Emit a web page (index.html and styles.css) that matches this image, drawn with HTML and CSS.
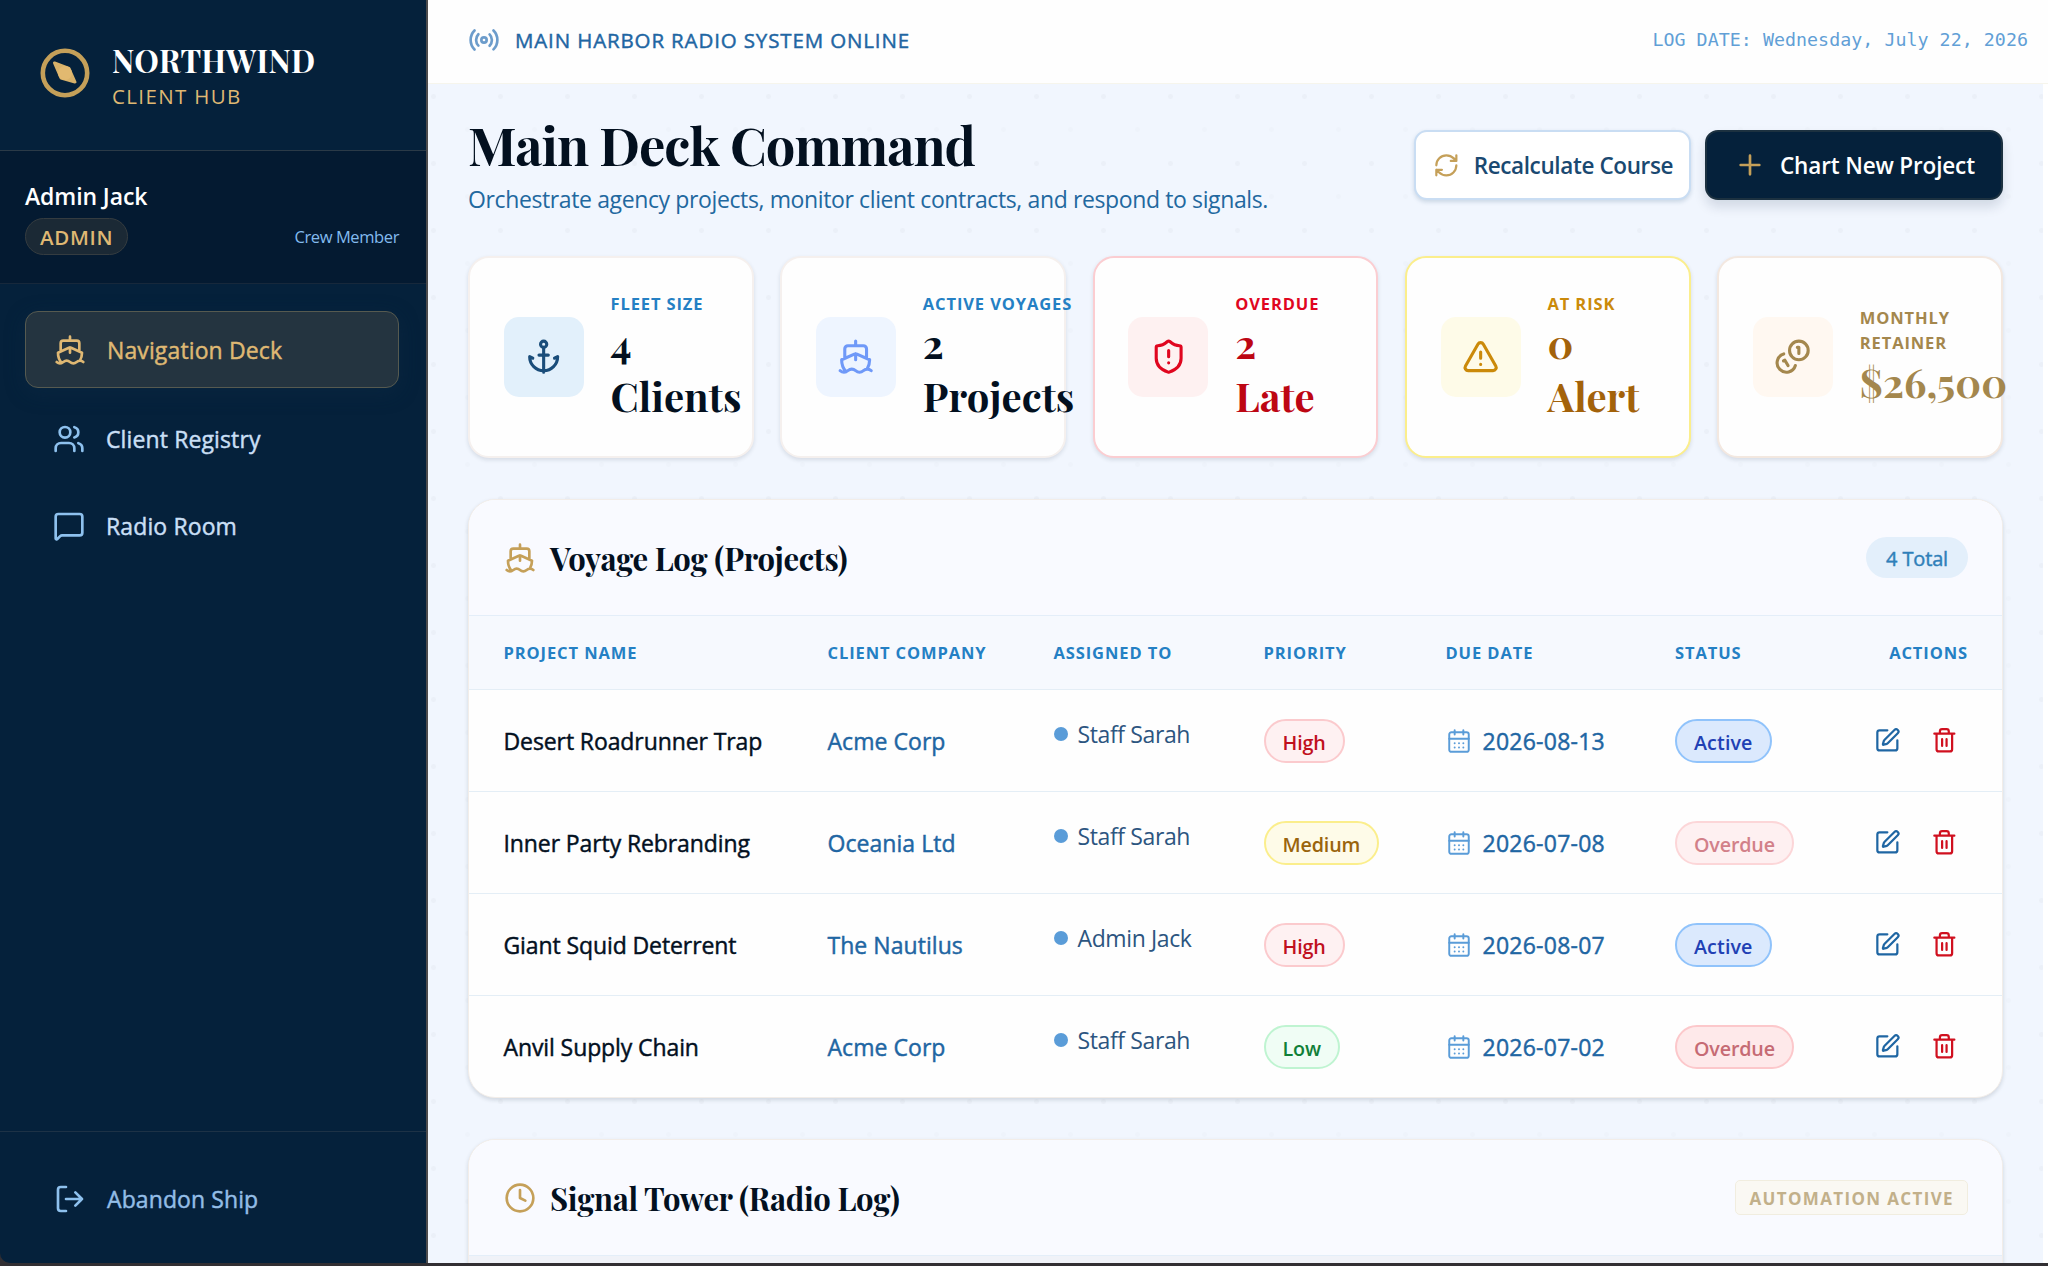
FILE: index.html
```html
<!DOCTYPE html>
<html lang="en">
<head>
<meta charset="utf-8">
<title>Northwind Client Hub</title>
<link rel="stylesheet" href="styles.css">
</head>
<body>
<svg class="sprite" aria-hidden="true">
  <symbol id="i-ship" viewBox="0 0 24 24"><path d="M12 10.189V14M12 2v3M19 13V7a2 2 0 0 0-2-2H7a2 2 0 0 0-2 2v6M19.38 20A11.6 11.6 0 0 0 21 14l-8.188-3.639a2 2 0 0 0-1.624 0L3 14a11.6 11.6 0 0 0 2.81 7.76M2 21c.6.5 1.2 1 2.5 1 2.5 0 2.5-2 5-2 1.3 0 1.9.5 2.5 1s1.2 1 2.5 1c2.5 0 2.5-2 5-2 1.3 0 1.9.5 2.5 1"/></symbol>
  <symbol id="i-users" viewBox="0 0 24 24"><path d="M16 21v-2a4 4 0 0 0-4-4H6a4 4 0 0 0-4 4v2M16 3.128a4 4 0 0 1 0 7.744M22 21v-2a4 4 0 0 0-3-3.87"/><circle cx="9" cy="7" r="4"/></symbol>
  <symbol id="i-chat" viewBox="0 0 24 24"><path d="M22 17a2 2 0 0 1-2 2H6.828a2 2 0 0 0-1.414.586l-2.202 2.202A.71.71 0 0 1 2 21.286V5a2 2 0 0 1 2-2h16a2 2 0 0 1 2 2z"/></symbol>
  <symbol id="i-exit" viewBox="0 0 24 24"><path d="M9 21H5a2 2 0 0 1-2-2V5a2 2 0 0 1 2-2h4M16 17l5-5-5-5M21 12H9"/></symbol>
  <symbol id="i-radio" viewBox="0 0 24 24"><path d="M4.9 19.1C1 15.2 1 8.8 4.9 4.9M7.8 16.2c-2.3-2.3-2.3-6.1 0-8.5M16.2 7.8c2.3 2.3 2.3 6.1 0 8.5M19.1 4.9C23 8.8 23 15.1 19.1 19"/><circle cx="12" cy="12" r="2"/></symbol>
  <symbol id="i-refresh" viewBox="0 0 24 24"><path d="M3 12a9 9 0 0 1 9-9 9.75 9.75 0 0 1 6.74 2.74L21 8M21 3v5h-5M21 12a9 9 0 0 1-9 9 9.75 9.75 0 0 1-6.74-2.74L3 16M8 16H3v5"/></symbol>
  <symbol id="i-plus" viewBox="0 0 24 24"><path d="M5 12h14M12 5v14"/></symbol>
  <symbol id="i-anchor" viewBox="0 0 24 24"><path d="M12 22V6M9 11h6M19 13l2-1a9 9 0 0 1-18 0l2 1"/><circle cx="12" cy="4" r="2"/></symbol>
  <symbol id="i-shield" viewBox="0 0 24 24"><path d="M20 13c0 5-3.5 7.5-7.66 8.95a1 1 0 0 1-.67-.01C7.5 20.5 4 18 4 13V6a1 1 0 0 1 1-1c2 0 4.5-1.2 6.24-2.72a1.17 1.17 0 0 1 1.52 0C14.51 3.81 17 5 19 5a1 1 0 0 1 1 1zM12 8v4M12 16h.01"/></symbol>
  <symbol id="i-alert" viewBox="0 0 24 24"><path d="m21.73 18-8-14a2 2 0 0 0-3.48 0l-8 14A2 2 0 0 0 4 21h16a2 2 0 0 0 1.73-3M12 9v4M12 17h.01"/></symbol>
  <symbol id="i-coins" viewBox="0 0 24 24"><path d="M13.744 17.736a6 6 0 1 1-7.48-7.48M15 6h1v4M6.134 14.768l.866-.5 2 3.464"/><circle cx="16" cy="8" r="6"/></symbol>
  <symbol id="i-cal" viewBox="0 0 24 24"><path d="M8 2v4M16 2v4M3 10h18M8 14h.01M12 14h.01M16 14h.01M8 18h.01M12 18h.01M16 18h.01"/><rect x="3" y="4" width="18" height="18" rx="2"/></symbol>
  <symbol id="i-edit" viewBox="0 0 24 24"><path d="M12 3H5a2 2 0 0 0-2 2v14a2 2 0 0 0 2 2h14a2 2 0 0 0 2-2v-7M18.375 2.625a1 1 0 0 1 3 3l-9.013 9.014a2 2 0 0 1-.853.505l-2.873.84a.5.5 0 0 1-.62-.62l.84-2.873a2 2 0 0 1 .506-.852z"/></symbol>
  <symbol id="i-trash" viewBox="0 0 24 24"><path d="M10 11v6M14 11v6M19 6v14a2 2 0 0 1-2 2H7a2 2 0 0 1-2-2V6M3 6h18M8 6V4a2 2 0 0 1 2-2h4a2 2 0 0 1 2 2v2"/></symbol>
  <symbol id="i-clock" viewBox="0 0 24 24"><circle cx="12" cy="12" r="10"/><path d="M12 6v6l4 2"/></symbol>
</svg>

<div class="app">
  <aside class="sidebar">
    <div class="brand">
      <svg class="brand-mark" viewBox="0 0 50 50"><circle class="ring" cx="25" cy="25" r="22.2"/><path class="needle" d="M14.5 15 29 20.5 35 34 21 30Z"/><circle class="hub" cx="25" cy="25" r="7"/></svg>
      <div class="brand-text">
        <div class="brand-name">NORTHWIND</div>
        <div class="brand-sub">CLIENT HUB</div>
      </div>
    </div>
    <div class="user">
      <div class="user-name">Admin Jack</div>
      <div class="user-row"><span class="role">ADMIN</span><span class="crew">Crew Member</span></div>
    </div>
    <nav class="nav">
      <a class="nav-item active"><svg class="icon"><use href="#i-ship"/></svg><span>Navigation Deck</span></a>
      <a class="nav-item"><svg class="icon"><use href="#i-users"/></svg><span>Client Registry</span></a>
      <a class="nav-item"><svg class="icon"><use href="#i-chat"/></svg><span>Radio Room</span></a>
    </nav>
    <div class="side-foot"><a class="leave"><svg class="icon"><use href="#i-exit"/></svg><span>Abandon Ship</span></a></div>
  </aside>

  <div class="main">
    <header class="topbar">
      <div class="status"><svg class="icon"><use href="#i-radio"/></svg><span>MAIN HARBOR RADIO SYSTEM ONLINE</span></div>
      <div class="log-date">LOG DATE: Wednesday, July 22, 2026</div>
    </header>
    <main class="content">
      <div class="page-head">
        <div>
          <h1>Main Deck Command</h1>
          <p class="lead">Orchestrate agency projects, monitor client contracts, and respond to signals.</p>
        </div>
        <div class="head-actions">
          <button class="btn btn-light"><svg class="icon"><use href="#i-refresh"/></svg><span>Recalculate Course</span></button>
          <button class="btn btn-dark"><svg class="icon"><use href="#i-plus"/></svg><span>Chart New Project</span></button>
        </div>
      </div>

      <section class="stats">
        <div class="stat fleet"><div class="stat-icon"><svg class="icon"><use href="#i-anchor"/></svg></div><div><div class="stat-label">FLEET SIZE</div><div class="stat-value">4<br>Clients</div></div></div>
        <div class="stat voyages"><div class="stat-icon"><svg class="icon"><use href="#i-ship"/></svg></div><div><div class="stat-label">ACTIVE VOYAGES</div><div class="stat-value">2<br>Projects</div></div></div>
        <div class="stat overdue"><div class="stat-icon"><svg class="icon"><use href="#i-shield"/></svg></div><div><div class="stat-label">OVERDUE</div><div class="stat-value">2<br>Late</div></div></div>
        <div class="stat risk"><div class="stat-icon"><svg class="icon"><use href="#i-alert"/></svg></div><div><div class="stat-label">AT RISK</div><div class="stat-value">0<br>Alert</div></div></div>
        <div class="stat retainer"><div class="stat-icon"><svg class="icon"><use href="#i-coins"/></svg></div><div><div class="stat-label">MONTHLY<br>RETAINER</div><div class="stat-value">$26,500</div></div></div>
      </section>

      <section class="panel">
        <div class="panel-head"><svg class="icon"><use href="#i-ship"/></svg><h2>Voyage Log (Projects)</h2><span class="count">4 Total</span></div>
        <div class="table">
          <div class="tr th"><div>PROJECT NAME</div><div>CLIENT COMPANY</div><div>ASSIGNED TO</div><div>PRIORITY</div><div>DUE DATE</div><div>STATUS</div><div class="acts">ACTIONS</div></div>
          <div class="tr"><div class="name">Desert Roadrunner Trap</div><div class="client">Acme Corp</div><div class="who"><i></i><span>Staff Sarah</span></div><div><span class="pill high">High</span></div><div class="due"><svg class="icon"><use href="#i-cal"/></svg><span>2026-08-13</span></div><div><span class="pill live">Active</span></div><div class="acts"><svg class="icon edit"><use href="#i-edit"/></svg><svg class="icon del"><use href="#i-trash"/></svg></div></div>
          <div class="tr"><div class="name">Inner Party Rebranding</div><div class="client">Oceania Ltd</div><div class="who"><i></i><span>Staff Sarah</span></div><div><span class="pill medium">Medium</span></div><div class="due"><svg class="icon"><use href="#i-cal"/></svg><span>2026-07-08</span></div><div><span class="pill late faded">Overdue</span></div><div class="acts"><svg class="icon edit"><use href="#i-edit"/></svg><svg class="icon del"><use href="#i-trash"/></svg></div></div>
          <div class="tr"><div class="name">Giant Squid Deterrent</div><div class="client">The Nautilus</div><div class="who"><i></i><span>Admin Jack</span></div><div><span class="pill high">High</span></div><div class="due"><svg class="icon"><use href="#i-cal"/></svg><span>2026-08-07</span></div><div><span class="pill live">Active</span></div><div class="acts"><svg class="icon edit"><use href="#i-edit"/></svg><svg class="icon del"><use href="#i-trash"/></svg></div></div>
          <div class="tr"><div class="name">Anvil Supply Chain</div><div class="client">Acme Corp</div><div class="who"><i></i><span>Staff Sarah</span></div><div><span class="pill low">Low</span></div><div class="due"><svg class="icon"><use href="#i-cal"/></svg><span>2026-07-02</span></div><div><span class="pill late">Overdue</span></div><div class="acts"><svg class="icon edit"><use href="#i-edit"/></svg><svg class="icon del"><use href="#i-trash"/></svg></div></div>
        </div>
      </section>

      <section class="panel">
        <div class="panel-head"><svg class="icon"><use href="#i-clock"/></svg><h2>Signal Tower (Radio Log)</h2><span class="auto">AUTOMATION ACTIVE</span></div>
        <div class="log-body"></div>
      </section>
    </main>
  </div>
</div>
</body>
</html>
```
FILE: styles.css
```css
* { box-sizing: border-box; }

:root {
  --navy: #05213b;
  --gold: #c5a059;
  --sans: "Segoe UI", "Open Sans", "Noto Sans", sans-serif;
  --serif: "Playfair Display", "Liberation Serif", serif;
}

body { margin: 0; height: 1266px; overflow: hidden; background: #322f33; font-family: var(--sans); font-size: 23px; color: #03101f; }
h1, h2, p { margin: 0; }
.sprite { position: absolute; width: 0; height: 0; }
.icon { flex: none; width: 24px; height: 24px; fill: none; stroke: currentColor; stroke-width: 2; stroke-linecap: round; stroke-linejoin: round; }
span { white-space: nowrap; }

.app { display: flex; height: 1263px; overflow: hidden; }

/* medium weight for the regular face */
.nav-item, .leave, .status, .name, .client, .due, .count { -webkit-text-stroke: .45px currentColor; }

/* sidebar */
.sidebar { flex: none; width: 428px; display: flex; flex-direction: column; background: var(--navy); border-right: 2px solid #4c4b4c; border-bottom-left-radius: 10px; }
.brand { display: flex; align-items: center; gap: 22px; height: 151px; padding: 0 40px 5px; border-bottom: 1.5px solid #2b3a47; }
.brand-mark { width: 50px; height: 50px; }
.ring { fill: none; stroke: #c5a059; stroke-width: 4.6; }
.needle { fill: #d8b26a; stroke: #d8b26a; stroke-width: 3; stroke-linejoin: round; }
.hub { fill: #e2b970; }
.brand-text { padding-top: 8px; }
.brand-name { font: bold 31px/38px var(--serif); letter-spacing: .2px; color: #fff; }
.brand-sub { font-size: 20.5px; line-height: 34px; letter-spacing: 1.35px; color: #dfb873; }
.user { height: 133px; padding: 27px 27px 0 25px; background: #041a31; border-bottom: 1.5px solid #17283b; color: #fff; }
.user-name { font-weight: 600; font-size: 23px; line-height: 36px; letter-spacing: -.1px; }
.user-row { display: flex; justify-content: space-between; align-items: center; margin-top: 4px; }
.role { display: flex; align-items: center; height: 37px; padding: 0 14px; border: 1.5px solid #353c40; border-radius: 19px; background: #1b2935; color: #dfb873; font-size: 20.5px; font-weight: 600; letter-spacing: .7px; }
.crew { font-size: 16.5px; letter-spacing: -.4px; color: #83bbee; }
.nav { flex: 1; padding: 27px 27px 0 25px; }
.nav-item { display: flex; align-items: center; gap: 21px; height: 77px; padding-left: 28px; margin-bottom: 10px; letter-spacing: .12px; color: #c9dff5; }
.nav-item .icon, .leave .icon { width: 32px; height: 32px; color: #8ec1ee; }
.nav-item.active { margin-bottom: 12px; border: 1.5px solid #565a50; border-radius: 13px; background: #243440; color: #dfb873; box-shadow: 0 5px 20px #0d2b4470; }
.nav-item.active .icon { color: #dfb873; }
.side-foot { height: 132px; padding: 27px 25px; border-top: 1.5px solid #1d3246; }
.leave { display: flex; align-items: center; gap: 21px; height: 80px; padding-left: 29px; letter-spacing: .1px; color: #93bde6; }

/* top bar */
.main { flex: 1; min-width: 0; display: flex; flex-direction: column; background: #fff; }
.topbar { flex: none; display: flex; justify-content: space-between; align-items: center; height: 84px; padding: 0 20px 4px 40px; border-bottom: 1.5px solid #f6f5ec; background: #fefefe; }
.status { display: flex; align-items: center; gap: 15px; font-size: 20.5px; letter-spacing: .86px; color: #1f66a3; }
.status .icon { width: 32px; height: 32px; color: #6c9ccb; }
.log-date { font: 18.3px "DejaVu Sans Mono", monospace; letter-spacing: .04px; color: #619fd6; }

/* content area with dotted chart paper */
.content {
  flex: 1; margin-right: 5px; padding: 0 40px; overflow: hidden;
  background-color: #f1f6fe;
  background-image: radial-gradient(circle, #ebf0f8 0 2px, transparent 3px), radial-gradient(circle, #eef3fb 0 2px, transparent 3px);
  background-size: 67px 67px;
  background-position: -28px -21px, 6px 12px;
}
.page-head { display: flex; justify-content: space-between; height: 171.5px; padding-top: 30px; }
h1 { font: bold 52.4px/60px var(--serif); letter-spacing: -1px; }
.lead { margin-top: 8px; font-size: 23px; line-height: 34px; letter-spacing: -.38px; color: #22689f; }
.head-actions { display: flex; gap: 14px; padding-top: 16px; }
.btn { display: flex; align-items: center; gap: 14px; height: 70px; border-radius: 13px; font-family: var(--sans); font-size: 22.5px; font-weight: 600; letter-spacing: -.25px; }
.btn .icon { color: var(--gold); }
.btn-light { width: 277px; padding: 0 0 0 17px; border: 2px solid #c9ddf3; background: #fff; color: #1a4971; letter-spacing: -.38px; box-shadow: 0 2px 4px #1a49712e; }
.btn-light .icon { width: 26.7px; height: 26.7px; }
.btn-dark { width: 298px; padding: 0 0 0 27px; border: 2px solid #1c3140; background: var(--navy); color: #fff; letter-spacing: -.15px; box-shadow: 0 7px 12px #0a1e3a22; }
.btn-dark .icon { width: 32px; height: 32px; }
.btn span { padding-top: 1px; }

.stats { display: grid; grid-template-columns: repeat(5, minmax(0, 1fr)); gap: 26.7px; }
.stat { display: flex; align-items: center; gap: 27px; height: 202.5px; padding: 0 33.5px; border: 2px solid #f5f0ee; border-radius: 21px; background: #fefefe; box-shadow: 0 2px 4px #1020301f; }
.stat-icon { flex: none; display: grid; place-items: center; width: 80px; height: 80px; border-radius: 15px; }
.stat-icon .icon { width: 37.3px; height: 37.3px; }
.stat-label { font-size: 16.5px; line-height: 25.3px; font-weight: 700; letter-spacing: .88px; color: #2480c4; white-space: nowrap; }
.stat-value { font: bold 40px/53.3px var(--serif); letter-spacing: .1px; }
.fleet .stat-icon { background: #e2f0fb; color: #1a4d7a; }
.voyages .stat-icon { background: #eef5ff; color: #6f99f8; }
.overdue { border-color: #fbcdd1; }
.overdue .stat-icon { background: #fef1f1; color: #e0061f; }
.overdue .stat-label { color: #e0061f; }
.overdue .stat-value { color: #bd0613; }
.risk { border-color: #fbee8c; }
.risk .stat-icon { background: #fefbe8; color: #cb8a0a; }
.risk .stat-label { color: #cb8a0a; }
.risk .stat-value { color: #a3620a; }
.retainer { border-color: #f3e8e0; }
.retainer .stat-icon { background: #fff8f1; color: #a4874d; }
.retainer .stat-label, .retainer .stat-value { color: #a4874d; }

/* panels */
.panel { margin-top: 41px; border: 1.5px solid #f2ede9; border-radius: 27px; background: #fefefe; overflow: hidden; box-shadow: 0 2px 4px #10203026; }
.panel-head { display: flex; align-items: center; height: 116px; padding: 0 34px 0 35px; border-bottom: 1.5px solid #e4eef9; background: #f9faff; }
.panel-head .icon { width: 32px; height: 32px; color: var(--gold); }
h2 { margin-left: 14px; font: bold 31px/44px var(--serif); letter-spacing: -.33px; }
.count { margin-left: auto; display: flex; align-items: center; height: 41px; padding: 1px 20px 0; border-radius: 21px; background: #e3effb; color: #2f7fb9; font-size: 20px; letter-spacing: -.15px; }
.auto { margin-left: auto; display: flex; align-items: center; height: 35px; padding: 1px 13px 0; border: 1.5px solid #f1eddf; border-radius: 5px; background: #faf8f3; color: #c2b08a; font-size: 17px; font-weight: 700; letter-spacing: 1.35px; }
.log-body { height: 120px; background: #f0f2f8; }

.tr { display: grid; grid-template-columns: 324px 226px 210px 182px 229.5px 148px 1fr; align-items: center; height: 102px; padding-left: 34.5px; border-top: 1.5px solid #e4eef6; }
.tr.th { height: 73px; border-top: 0; background: #f6f9fe; font-size: 16.5px; font-weight: 700; letter-spacing: .9px; color: #2480c4; }
.name { letter-spacing: -.1px; }
.client, .due { color: #1f66a3; }
.client { letter-spacing: .05px; }
.who { display: flex; align-items: center; gap: 10px; margin-top: -13px; letter-spacing: -.38px; color: #2c5580; }
.who i { width: 14px; height: 14px; border-radius: 50%; background: #5a9cd8; }
.pill { display: inline-flex; align-items: center; height: 44px; padding: 3px 17px 0; border: 2px solid; border-radius: 22px; font-size: 19.7px; font-weight: 600; letter-spacing: -.15px; vertical-align: middle; }
.high { color: #c0101d; background: #fef1f2; border-color: #fbcacd; }
.medium { color: #9a640c; background: #fefbe8; border-color: #fbee8c; }
.low { color: #108038; background: #f0fdf5; border-color: #bff4d1; }
.live { color: #2140b4; background: #dbe9fd; border-color: #90c3fb; letter-spacing: .1px; }
.late { color: #c66b74; background: #fee9ea; border-color: #fcc8cb; }
.late.faded { color: #d28089; background: #fef0f1; border-color: #fcd6d8; }
.due { display: flex; align-items: center; gap: 11px; letter-spacing: .25px; }
.due .icon { width: 26px; height: 26px; color: #5a9cd8; stroke-width: 1.8; }
.acts { display: flex; justify-content: flex-end; gap: 30.5px; padding-right: 34px; }
.tr:not(.th) .acts { padding-right: 44.5px; }
.edit { width: 26.7px; height: 26.7px; color: #1f66a3; }
.del { width: 26.7px; height: 26.7px; color: #d0101f; }
```
